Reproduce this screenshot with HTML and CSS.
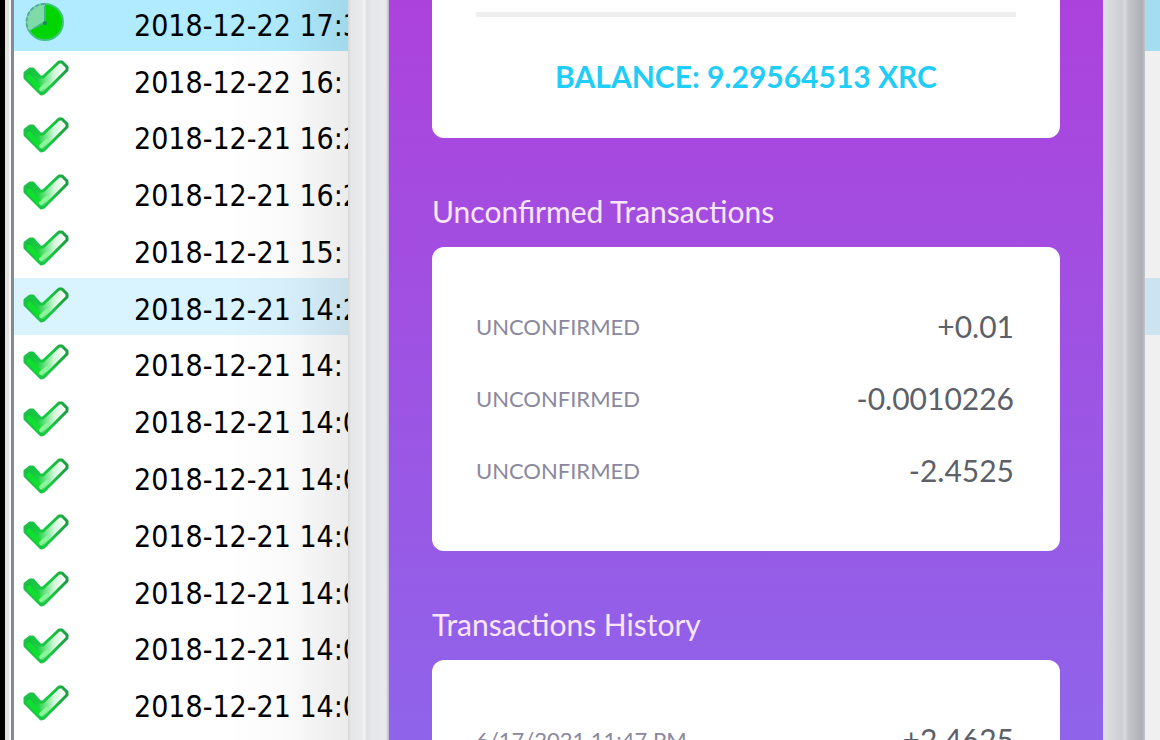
FILE: index.html
```html
<!DOCTYPE html>
<html lang="en">
<head>
    <meta charset="UTF-8">
    <meta name="viewport" content="width=device-width, initial-scale=1.0">
    <title>Wallet</title>
    <link rel="stylesheet" href="styles.css">
</head>
<body>

    <!-- Shared icons -->
    <svg class="icon-defs" aria-hidden="true">
        <defs>
            <linearGradient id="tickFill" x1="0" y1="0" x2="1" y2="0">
                <stop offset="0" stop-color="#10b93c"/>
                <stop offset="0.3" stop-color="#1ccf42"/>
                <stop offset="0.5" stop-color="#74e58a"/>
                <stop offset="0.7" stop-color="#d5f7dc"/>
                <stop offset="1" stop-color="#ffffff"/>
            </linearGradient>
            <linearGradient id="tickEdge" x1="0" y1="0" x2="1" y2="0">
                <stop offset="0" stop-color="#1fbf4a"/>
                <stop offset="0.6" stop-color="#14cb40"/>
                <stop offset="1" stop-color="#1d9a42"/>
            </linearGradient>
            <symbol id="tick" viewBox="0 0 48 40">
                <path d="M4 14 L9 10 L12 10 L19 18 L22 18 L38 3 L41 3 L46 8 L46 11 L23 34 L20 35 L4 19 Z" fill="url(#tickFill)" stroke="url(#tickEdge)" stroke-width="3" stroke-linejoin="round"/>
                <path d="M8 18 L18 29" stroke="#0fe02e" stroke-width="5" stroke-linecap="round"/>
                <path d="M20 30 L26 25" stroke="#8df59a" stroke-width="4" stroke-linecap="round"/>
            </symbol>
            <symbol id="clock" viewBox="0 0 48 40">
                <circle cx="24" cy="20" r="18" fill="#00d500" stroke="#3fc67c" stroke-width="2"/>
                <path d="M24 20 L24 2 A18 18 0 0 0 8 29 Z" fill="#7edba8"/>
                <path d="M24 2 A18 18 0 0 0 8 29" fill="none" stroke="#58a99d" stroke-width="2" stroke-dasharray="4 2"/>
                <path d="M24 4 L24 20 L12 27" fill="none" stroke="#43b383" stroke-width="2"/>
                <circle cx="24" cy="21" r="2" fill="#168a58"/>
            </symbol>
        </defs>
    </svg>

    <!-- Desktop wallet -->
    <div class="desktop">
        <table class="tx-list">
            <tbody>
                <tr class="selected"><td class="status"><svg><use href="#clock"/></svg></td><td>2018-12-22 17:3</td></tr>
                <tr><td class="status"><svg><use href="#tick"/></svg></td><td>2018-12-22 16:</td></tr>
                <tr><td class="status"><svg><use href="#tick"/></svg></td><td>2018-12-21 16:2</td></tr>
                <tr><td class="status"><svg><use href="#tick"/></svg></td><td>2018-12-21 16:2</td></tr>
                <tr><td class="status"><svg><use href="#tick"/></svg></td><td>2018-12-21 15:</td></tr>
                <tr class="hovered"><td class="status"><svg><use href="#tick"/></svg></td><td>2018-12-21 14:2</td></tr>
                <tr><td class="status"><svg><use href="#tick"/></svg></td><td>2018-12-21 14:</td></tr>
                <tr><td class="status"><svg><use href="#tick"/></svg></td><td>2018-12-21 14:0</td></tr>
                <tr><td class="status"><svg><use href="#tick"/></svg></td><td>2018-12-21 14:0</td></tr>
                <tr><td class="status"><svg><use href="#tick"/></svg></td><td>2018-12-21 14:0</td></tr>
                <tr><td class="status"><svg><use href="#tick"/></svg></td><td>2018-12-21 14:0</td></tr>
                <tr><td class="status"><svg><use href="#tick"/></svg></td><td>2018-12-21 14:0</td></tr>
                <tr><td class="status"><svg><use href="#tick"/></svg></td><td>2018-12-21 14:0</td></tr>
            </tbody>
        </table>
    </div>

    <!-- Phone wallet -->
    <div class="phone">
        <div class="screen">
            <div class="card balance-card">
                <p class="balance">BALANCE: 9.29564513 XRC</p>
            </div>

            <h2>Unconfirmed Transactions</h2>
            <div class="card">
                <div class="row"><span class="label">UNCONFIRMED</span><span class="amount">+0.01</span></div>
                <div class="row"><span class="label">UNCONFIRMED</span><span class="amount">-0.0010226</span></div>
                <div class="row"><span class="label">UNCONFIRMED</span><span class="amount">-2.4525</span></div>
            </div>

            <h2>Transactions History</h2>
            <div class="card">
                <div class="row"><span class="label">6/17/2021 11:47 PM</span><span class="amount">+2.4625</span></div>
            </div>
        </div>
    </div>

</body>
</html>
```
FILE: styles.css
```css
* {
    box-sizing: border-box;
}
body {
    margin: 0;
    height: 100vh;
    position: relative;
    overflow: hidden;
    background: #fff;
    font-family: Lato, sans-serif;
}
.icon-defs {
    position: absolute;
    width: 0;
    height: 0;
}

/* Desktop wallet */
.desktop {
    height: 100vh;
    overflow: hidden;
    border-left: 5px solid #000;
    background: linear-gradient(to right, #e3e3e3 0, #e3e3e3 4px, #f5f5f5 4px, #f5f5f5 6px, #858b94 6px, #858b94 9px, #fff 9px);
    padding-left: 9px;
}
.tx-list {
    width: 100%;
    height: calc(100vh - 2px);
    margin-top: -6px;
    border-collapse: collapse;
    font-family: "DejaVu Sans Condensed", "DejaVu Sans", sans-serif;
    font-stretch: condensed;
    font-size: 30px;
    line-height: 36px;
    color: #000;
}
.tx-list td {
    padding: 7px 0 0;
    white-space: nowrap;
}
.tx-list .status {
    width: 120px;
    padding: 0 0 0 7px;
}
.status svg {
    display: block;
    width: 48px;
    height: 40px;
}
.selected {
    background: #b0ebff;
}
.hovered {
    background: #d9f3ff;
}

/* Phone wallet */
.phone {
    position: absolute;
    top: 0;
    bottom: 0;
    left: 30%;
    right: 15px;
    padding: 0 42px 0 41px;
    background:
        linear-gradient(to right, #d5d6d8 0, #e6e7e9 3px, #e9eaec 14px, #f6f6f7 16px, #dfe0e3 19px, #e6e7e9 25px, #e8e9eb 38px, #b9afc9 41px, transparent 41px),
        linear-gradient(to left, #c5c6cb 0, #adaeb4 3px, #b9bac0 9px, #c5c6cc 17px, #d9dade 20px, #cdced3 23px, #d7d9de 34px, #dfe0e4 41px, #dfe0e4 42px);
}
/* shade the phone casts on the list */
.phone::before {
    content: "";
    position: absolute;
    top: 0;
    bottom: 0;
    right: 100%;
    width: 120px;
    background: linear-gradient(to right, transparent, rgba(0, 0, 0, 0.02) 50%, rgba(0, 0, 0, 0.08));
}
.phone::after {
    content: "";
    position: absolute;
    top: 0;
    bottom: 0;
    left: 100%;
    width: 15px;
    background: rgba(0, 0, 0, 0.06);
}
.screen {
    height: 100%;
    overflow: hidden;
    padding: 0 43px;
    background: linear-gradient(#ac42dc, #8f64ea);
}
.card {
    padding: 44px;
    background: #fff;
    border-radius: 12px;
}
.balance-card {
    margin-top: -32px;
    height: 170px;
}
.balance {
    margin: 0;
    padding-top: 41px;
    border-top: 5px solid #efeff0;
    font-size: 30px;
    line-height: 36px;
    font-weight: bold;
    text-align: center;
    color: #1fcdf7;
}
h2 {
    margin: 0;
    padding: 55px 0 18px;
    font-size: 30px;
    line-height: 36px;
    font-weight: normal;
    color: #f8e6fc;
}
.row {
    display: flex;
    justify-content: space-between;
    align-items: center;
    height: 72px;
    padding: 0 2px 2px 0;
}
.label {
    font-size: 22px;
    color: #8a88a0;
}
.amount {
    font-size: 30px;
    color: #5b6069;
}
```
